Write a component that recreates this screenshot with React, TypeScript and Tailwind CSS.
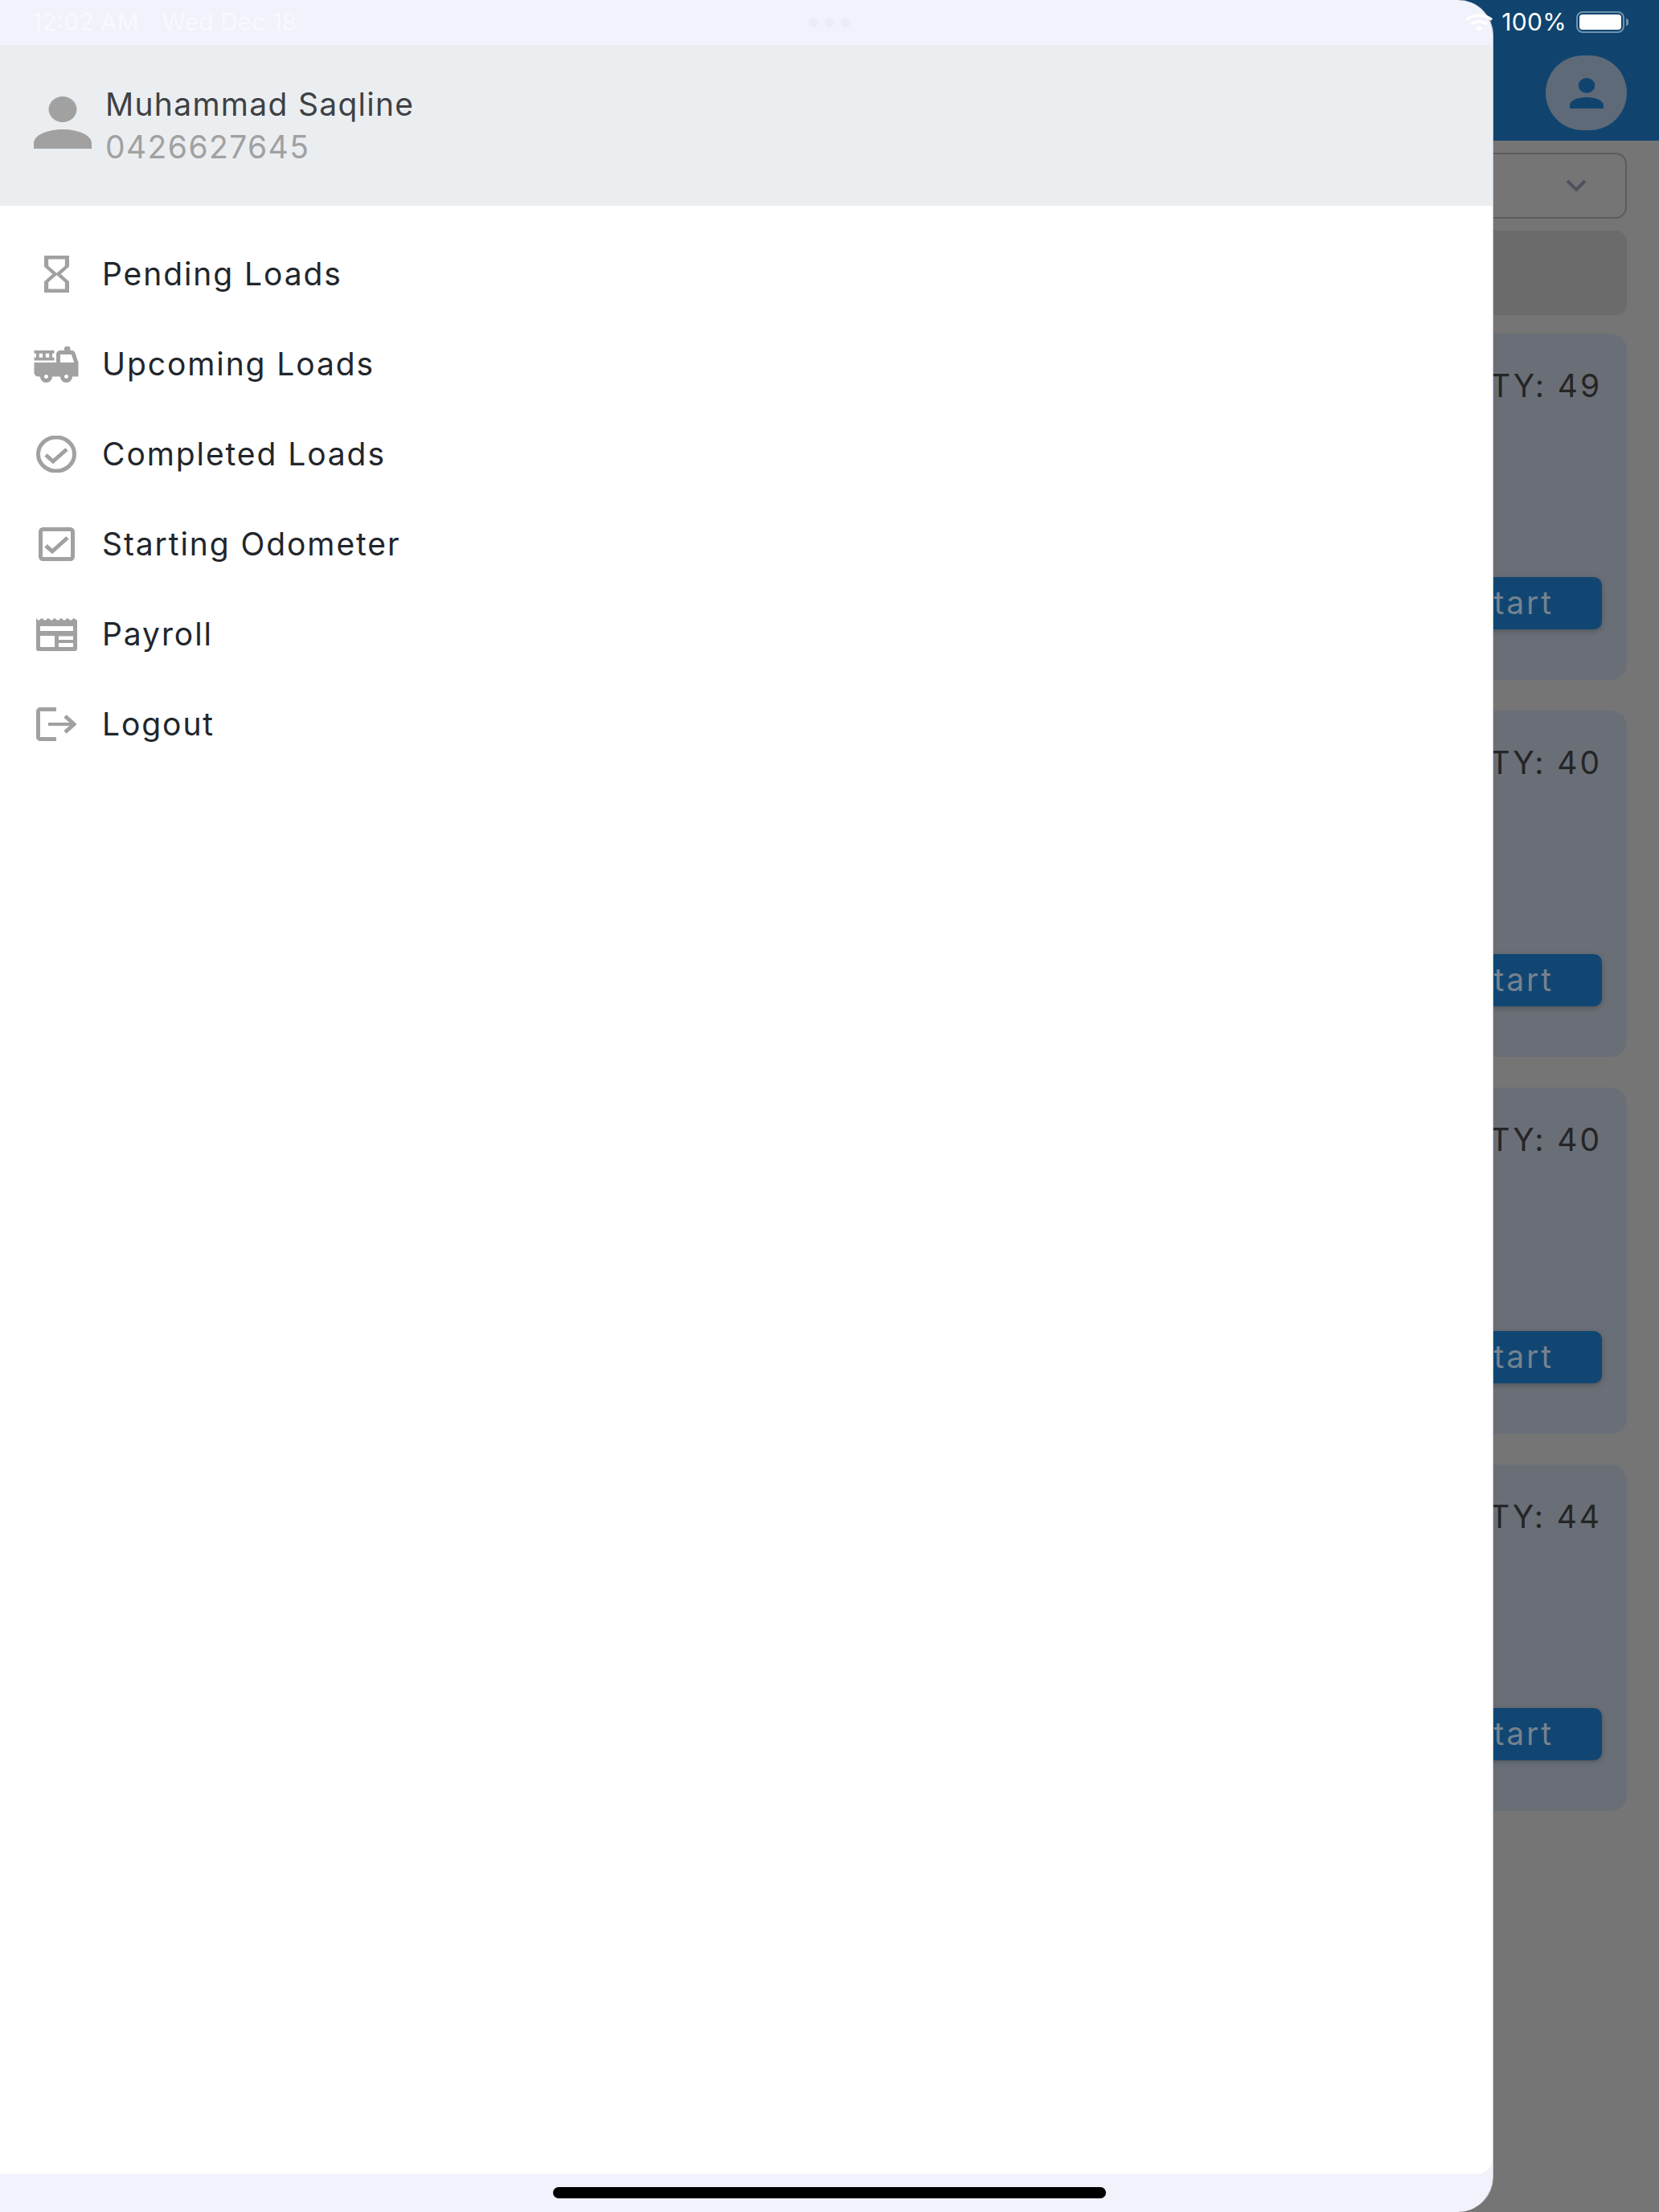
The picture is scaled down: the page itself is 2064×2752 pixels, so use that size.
import React from "react";
import { MdFireTruck } from "react-icons/md";

const menuItems = [
  { label: "Pending Loads", icon: <HourglassIcon /> },
  { label: "Upcoming Loads", icon: <MdFireTruck size={61} color="#a1a1a1" /> },
  { label: "Completed Loads", icon: <CircleCheckIcon /> },
  { label: "Starting Odometer", icon: <BoxCheckIcon /> },
  { label: "Payroll", icon: <PayrollIcon /> },
  { label: "Logout", icon: <LogoutIcon /> },
];

const loads = ["QTY: 49", "QTY: 40", "QTY: 40", "QTY: 44"];

function HourglassIcon() {
  return (
    <svg width="31" height="46" viewBox="6 2 12 20" preserveAspectRatio="none" fill="#a1a1a1">
      <path d="M6 2v6h.01L6 8.01 10 12l-4 4 .01.01H6V22h12v-5.99h-.01L18 16l-4-4 4-3.99-.01-.01H18V2H6zm10 14.5V20H8v-3.5l4-4 4 4zm-4-5l-4-4V4h8v3.5l-4 4z" />
    </svg>
  );
}

function CircleCheckIcon() {
  return (
    <svg width="50" height="46" viewBox="0 0 50 46" fill="none" stroke="#a1a1a1">
      <ellipse cx="25" cy="23" rx="22.500" ry="21" strokeWidth="5" />
      <path d="M12 24l9 8 17-15" strokeWidth="5" />
    </svg>
  );
}

function BoxCheckIcon() {
  return (
    <svg width="45" height="42" viewBox="0 0 45 42" fill="none" stroke="#a1a1a1">
      <rect x="2.500" y="2.500" width="40" height="37" rx="3" strokeWidth="5" />
      <path d="M9 23l8 7 19-17" strokeWidth="5" />
    </svg>
  );
}

function PayrollIcon() {
  return (
    <svg width="51" height="41" viewBox="0 0 51 41" fill="#a1a1a1">
      <path
        fillRule="evenodd"
        d="M0 0l3 3 4-3 4 3 4-3 4 3 4-3 4 3 4-3 4 3 4-3 4 3 4-3 4 3v35a3 3 0 0 1-3 3H3a3 3 0 0 1-3-3zM5 10v6h41v-6zM5 22v14h18V22zM28 22.500V27h18v-4.500zM28 31v5h18v-5z"
      />
    </svg>
  );
}

function LogoutIcon() {
  return (
    <svg width="50" height="42" viewBox="0 0 50 42" fill="none" stroke="#a1a1a1">
      <path d="M25 2.500H5a2.500 2.500 0 0 0-2.500 2.500v32a2.500 2.500 0 0 0 2.500 2.500h20" strokeWidth="5" />
      <path d="M15 21h32" strokeWidth="4" />
      <path d="M36 11l11 10-11 10" strokeWidth="5" />
    </svg>
  );
}

function PersonIcon() {
  return (
    <svg width="72" height="65" viewBox="0 0 72 65" fill="#a1a1a1">
      <ellipse cx="36" cy="16" rx="17.500" ry="16" />
      <path d="M0 65V58C0 48 17 41 36 41s36 7 36 17v7z" />
    </svg>
  );
}

function WifiIcon() {
  return (
    <svg width="36" height="24" viewBox="0 0 36 24" fill="none" stroke="#ffffff" strokeWidth="3.500">
      <path d="M2 8.500C11 1 25 1 34 8.500" />
      <path d="M8 14c6-4.500 14-4.500 20 0" />
      <path d="M18 23l-5-4.500c3-2 7-2 10 0z" fill="#ffffff" stroke="none" />
    </svg>
  );
}

function StatusBar() {
  return (
    <div className="absolute top-0 left-0 right-0 h-[55px] flex items-center pl-[40px] pr-[38px] text-[30px] text-white">
      <span className="opacity-60">12:02 AM</span>
      <span className="opacity-60 ml-[29px]">Wed Dec 18</span>
      <div className="absolute left-[1006px] top-[22px] flex gap-[8px]">
        <div className="w-[12px] h-[12px] rounded-full bg-[#ebecf6]" />
        <div className="w-[12px] h-[12px] rounded-full bg-[#ebecf6]" />
        <div className="w-[12px] h-[12px] rounded-full bg-[#ebecf6]" />
      </div>
      <div className="ml-auto flex items-center">
        <WifiIcon />
        <span className="ml-[10px] tracking-[0.01em]">100%</span>
        <div className="ml-[12px] w-[60px] h-[27px] rounded-[8px] border-[2px] border-[#6f92ad] p-[2px]">
          <div className="w-full h-full rounded-[4px] bg-white" />
        </div>
        <div className="ml-[2px] w-[3px] h-[9px] rounded-r-full bg-[#6f92ad]" />
      </div>
    </div>
  );
}

function Drawer() {
  return (
    <div className="absolute top-0 left-0 bottom-0 w-[1858px] flex flex-col bg-[#f1f2fb] rounded-tr-[44px] rounded-br-[44px] overflow-hidden border-r border-[#c9c9cf]">
      <div className="h-[56px] shrink-0" />
      <div className="h-[200px] shrink-0 bg-[#ebeef1] flex items-center pl-[42px]">
        <div className="mb-[8px]">
          <PersonIcon />
        </div>
        <div className="ml-[17px] flex flex-col">
          <span className="text-[39px] leading-[53px] tracking-[0.033em] text-[#3f4144]">Muhammad Saqline</span>
          <span className="text-[39px] leading-[53px] tracking-[0.036em] text-[#a1a1a1]">0426627645</span>
        </div>
      </div>
      <div className="flex-1 bg-white rounded-br-[20px] pt-[29px]">
        {menuItems.map((item) => (
          <div key={item.label} className="h-[112px] flex items-center">
            <div className="ml-[40px] w-[60px] flex justify-center">{item.icon}</div>
            <span className="ml-[27px] text-[39px] tracking-[0.049em] text-[#22262b]">{item.label}</span>
          </div>
        ))}
      </div>
      <div className="h-[47px] shrink-0" />
    </div>
  );
}

export default function App() {
  return (
    <div className="relative w-[2064px] h-[2752px] overflow-hidden bg-[#757575] font-['Inter',sans-serif]">
      <div className="h-[175px] bg-[#10446f] flex justify-end items-start pt-[69px] pr-[40px]">
        <div className="w-[101px] h-[93px] rounded-full bg-[#5f6a78] flex items-center justify-center">
          <svg width="42" height="38" viewBox="0 0 72 65" fill="#10446f">
            <ellipse cx="36" cy="16" rx="17.500" ry="16" />
            <path d="M0 65V58C0 48 17 41 36 41s36 7 36 17v7z" />
          </svg>
        </div>
      </div>

      <div className="pl-[40px] pr-[40px] pt-[15px]">
        <div className="h-[82px] rounded-[14px] border-[2px] border-[#5c5c5c] flex items-center justify-end pr-[48px]">
          <svg width="26" height="16" viewBox="0 0 26 16" fill="none" stroke="#4d525c" strokeWidth="4">
            <path d="M2 2l11 11L24 2" />
          </svg>
        </div>
        <div className="h-[105px] mt-[15px] rounded-[14px] bg-[#6b6b6c]" />
        <div className="mt-[23px] flex flex-col gap-[38px]">
          {loads.map((qty, i) => (
            <div key={i} className="h-[431px] rounded-[20px] bg-[#6a6f77] flex flex-col items-end pt-[42px] pr-[31px]">
              <span className="text-[39px] leading-[46px] tracking-[0.075em] text-[#252525]">{qty}</span>
              <div className="mt-[215px] w-[400px] h-[65px] rounded-[10px] bg-[#114672] shadow-[0_2px_6px_rgba(0,0,0,0.25)] flex items-center justify-end pr-[60px] text-[39px] tracking-[0.075em] text-[#75828f]">
                Start
              </div>
            </div>
          ))}
        </div>
      </div>

      <Drawer />
      <StatusBar />
      <div className="absolute left-[688px] bottom-[17px] w-[688px] h-[14px] rounded-full bg-black" />
    </div>
  );
}
